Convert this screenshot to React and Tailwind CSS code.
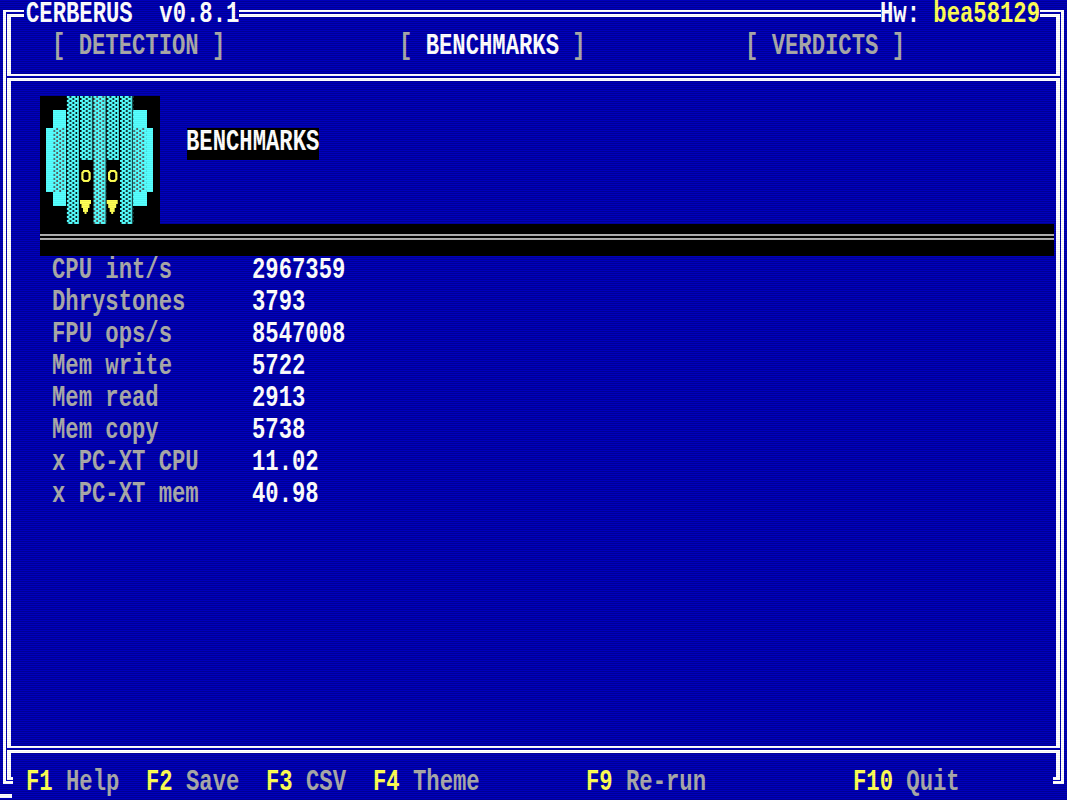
import React from "react";

const metrics = [
  ["CPU int/s", "2967359"],
  ["Dhrystones", "3793"],
  ["FPU ops/s", "8547008"],
  ["Mem write", "5722"],
  ["Mem read", "2913"],
  ["Mem copy", "5738"],
  ["x PC-XT CPU", "11.02"],
  ["x PC-XT mem", "40.98"],
];

const keys = [
  ["F1", "Help", "w-[120px]"],
  ["F2", "Save", "w-[120px]"],
  ["F3", "CSV", "w-[107px]"],
  ["F4", "Theme", "w-[213px]"],
  ["F9", "Re-run", "w-[267px]"],
  ["F10", "Quit", "w-[120px]"],
];

// Text stretched to the tall proportions of a 32px character cell.
function T({ children, className = "-ml-px" }) {
  return (
    <span className={"block h-6 shrink-0 origin-top scale-y-[1.32] whitespace-pre leading-[22.5px] " + className}>
      {children}
    </span>
  );
}

function Rule({ className = "" }) {
  return <div className={"h-[7px] shrink-0 border-b-[3px] border-t-2 border-white " + className} />;
}

// One framed band: outer vertical lines, then a 1px gap inside them.
function Band({ children, className = "" }) {
  return (
    <div className={"mx-[3px] flex shrink-0 border-x-[3px] border-white " + className}>
      <div className="mx-px flex min-w-0 flex-1 flex-col">{children}</div>
    </div>
  );
}

function Mascot() {
  return (
    <svg width="120" height="128" viewBox="0 0 120 128" className="block shrink-0 bg-black">
      <defs>
        <pattern id="dense" width="13.333" height="4" patternUnits="userSpaceOnUse">
          <rect width="12.2" height="4" fill="#55ffff" />
          <path fill="#000" d="M3 0h1.5v2h-1.5zM9 0h1.5v2h-1.5zM0 2h1.5v2h-1.5zM6 2h1.5v2h-1.5z" />
        </pattern>
        <pattern id="shade" width="13.333" height="4" patternUnits="userSpaceOnUse">
          <rect width="12.2" height="4" fill="#55ffff" />
          <path fill="#555" d="M3 0h1.7v2h-1.7zM9 0h1.7v2h-1.7zM0 2h1.7v2h-1.7zM6 2h1.7v2h-1.7z" />
        </pattern>
      </defs>
      <path fill="#55ffff" d="M13 14H26V110H13V96H6V32H13ZM93 14H107V32H113V96H107V110H93Z" />
      <path fill="url(#shade)" d="M13.3 32H26.6V96H13.3ZM93.3 32H106.6V96H93.3ZM53.3 0H66.6V128H53.3Z" />
      <path fill="url(#dense)" d="M26.6 0H40V128H26.6ZM40 0H53.3V64H40ZM66.6 0H80V64H66.6ZM80 0H93.3V128H80Z" />
      <path fill="none" stroke="#ffff55" strokeWidth="2.2" d="M44 75H48L49.6 77V83L48 85H44L42.4 83V77ZM70.7 75H74.7L76.3 77V83L74.7 85H70.7L69.1 83V77Z" />
      <path fill="#ffff55" d="M40 104H51V108H49.5V112H48V116H46.5V118H44.5V116H43V112H41.5V108H40ZM66.7 104H77.7V108H76.2V112H74.7V116H73.2V118H71.2V116H69.7V112H68.2V108H66.7Z" />
    </svg>
  );
}

export default function App() {
  return (
    <main className="relative flex h-[800px] w-[1067px] flex-col overflow-hidden bg-[repeating-linear-gradient(to_bottom,#0000bc_0px,#0000bc_1px,#00009c_1px,#00009c_2px)] font-['Liberation_Mono',monospace] text-[22.23px] font-bold text-[#aaaaaa]">
      <header className="flex h-8 shrink-0 text-white">
        <div className="w-6 shrink-0 pl-[3px] pt-[10px]">
          <div className="h-[22px] border-l-[3px] border-t-2 border-white pl-px pt-[2px]">
            <div className="h-[18px] border-l-4 border-t-[3px] border-white" />
          </div>
        </div>
        <div className="flex min-w-0 flex-1 items-start">
          <T className="ml-[2px]">CERBERUS  v0.8.1</T>
          <Rule className="mt-[10px] flex-1" />
          <T>Hw: <span className="text-[#ffff55]">bea58129</span></T>
        </div>
        <div className="w-[27px] shrink-0 pr-[3px] pt-[10px]">
          <div className="h-[22px] border-r-[3px] border-t-2 border-white pr-px pt-[2px]">
            <div className="h-[18px] border-r-4 border-t-[3px] border-white" />
          </div>
        </div>
      </header>
      <Band className="h-[49px]">
        <nav className="flex h-[42px] items-start border-x-4 border-white pl-[42px]">
          <T className="-ml-px w-[347px]">[ DETECTION ]</T>
          <T className="w-[347px]">[ <span className="text-white">BENCHMARKS</span> ]</T>
          <T>[ VERDICTS ]</T>
        </nav>
        <Rule />
      </Band>
      <Band className="h-[672px]">
        <section className="flex h-[665px] flex-col border-x-4 border-white pl-[29px] pt-[15px]">
          <div className="flex">
            <Mascot />
            <div className="ml-[27px] mt-8 h-8 bg-black text-white"><T>BENCHMARKS</T></div>
          </div>
          <div className="mr-[2px] h-8 shrink-0 bg-black pt-[10px]">
            <div className="h-[6px] border-y-2 border-[#b0b0b0]" />
          </div>
          <dl className="pl-[13px]">
            {metrics.map(([label, value]) => (
              <div key={label} className="flex h-8 items-start">
                <dt className="w-[200px]"><T>{label}</T></dt>
                <dd className="text-white"><T>{value}</T></dd>
              </div>
            ))}
          </dl>
        </section>
        <Rule />
      </Band>
      <footer className="flex h-[47px] shrink-0 px-[3px]">
        <div className="h-[31px] w-[10px] shrink-0 border-b-[3px] border-l-[3px] border-white pb-px pl-px">
          <div className="h-[27px] border-b-[3px] border-l-4 border-white" />
        </div>
        <div className="flex flex-1 items-start pl-[14px] pt-[15px]">
          {keys.map(([key, label, width]) => (
            <div key={key} className={width}>
              <T><span className="text-[#ffff55]">{key}</span> {label}</T>
            </div>
          ))}
        </div>
        <div className="h-[31px] w-[11px] shrink-0 border-b-[3px] border-r-[3px] border-white pb-px pr-px">
          <div className="h-[27px] border-b-[3px] border-r-4 border-white" />
        </div>
      </footer>
      <div className="absolute bottom-[2px] left-0 h-1 w-3 bg-white" />
      <div className="pointer-events-none absolute inset-0 bg-[repeating-linear-gradient(to_bottom,transparent_0px,transparent_1px,rgba(0,0,0,0.05)_1px,rgba(0,0,0,0.05)_2px)]" />
    </main>
  );
}
